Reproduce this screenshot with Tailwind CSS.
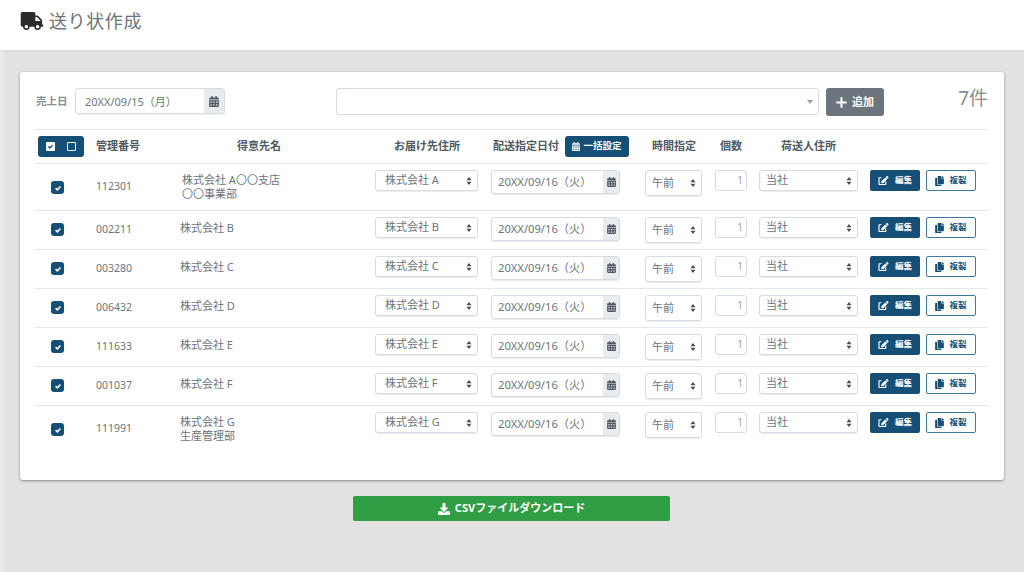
<!DOCTYPE html>
<html lang="ja">
<head>
  <meta charset="UTF-8" />
  <title>送り状作成</title>
  <script src="https://cdn.jsdelivr.net/npm/@tailwindcss/browser@4"></script>
</head>
<body class="relative h-[572px] w-[1024px] overflow-hidden bg-[#e2e2e2] font-['Noto_Sans','Noto_Sans_CJK_JP',sans-serif] text-[#6c757d]">
  <svg class="hidden">
    <symbol id="i-truck" viewBox="0 0 640 512"><path fill="currentColor" d="M624 352h-16V243.9c0-12.7-5.1-24.9-14.1-33.9L494 110.1c-9-9-21.2-14.1-33.9-14.1H416V48c0-26.5-21.5-48-48-48H48C21.5 0 0 21.5 0 48v320c0 26.5 21.5 48 48 48h16c0 53 43 96 96 96s96-43 96-96h128c0 53 43 96 96 96s96-43 96-96h48c8.8 0 16-7.2 16-16v-32c0-8.8-7.2-16-16-16zM160 464c-26.5 0-48-21.5-48-48s21.5-48 48-48 48 21.5 48 48-21.5 48-48 48zm320 0c-26.5 0-48-21.5-48-48s21.5-48 48-48 48 21.5 48 48-21.5 48-48 48zm80-208H416V144h44.1l99.9 99.9V256z"/></symbol>
    <symbol id="i-cal" viewBox="0 0 448 512"><path fill="currentColor" d="M0 464c0 26.5 21.5 48 48 48h352c26.5 0 48-21.5 48-48V192H0v272zm320-196c0-6.6 5.4-12 12-12h40c6.6 0 12 5.4 12 12v40c0 6.6-5.4 12-12 12h-40c-6.6 0-12-5.4-12-12v-40zm0 128c0-6.6 5.4-12 12-12h40c6.6 0 12 5.4 12 12v40c0 6.6-5.4 12-12 12h-40c-6.6 0-12-5.4-12-12v-40zM192 268c0-6.6 5.4-12 12-12h40c6.6 0 12 5.4 12 12v40c0 6.6-5.4 12-12 12h-40c-6.6 0-12-5.4-12-12v-40zm0 128c0-6.6 5.4-12 12-12h40c6.6 0 12 5.4 12 12v40c0 6.6-5.4 12-12 12h-40c-6.6 0-12-5.4-12-12v-40zM64 268c0-6.6 5.4-12 12-12h40c6.6 0 12 5.4 12 12v40c0 6.6-5.4 12-12 12H76c-6.6 0-12-5.4-12-12v-40zm0 128c0-6.6 5.4-12 12-12h40c6.6 0 12 5.4 12 12v40c0 6.6-5.4 12-12 12H76c-6.6 0-12-5.4-12-12v-40zM400 64h-48V16c0-8.8-7.2-16-16-16h-32c-8.8 0-16 7.2-16 16v48H160V16c0-8.8-7.2-16-16-16h-32c-8.8 0-16 7.2-16 16v48H48C21.5 64 0 85.5 0 112v48h448v-48c0-26.5-21.5-48-48-48z"/></symbol>
    <symbol id="i-edit" viewBox="0 0 576 512"><path fill="currentColor" d="M402.6 83.2l90.2 90.2c3.8 3.8 3.8 10 0 13.8L274.4 405.6l-92.8 10.3c-12.4 1.4-22.9-9.1-21.5-21.5l10.3-92.8L388.8 83.2c3.8-3.8 10-3.8 13.8 0zm162-22.9l-48.8-48.8c-15.2-15.2-39.9-15.2-55.2 0l-35.4 35.4c-3.8 3.8-3.8 10 0 13.8l90.2 90.2c3.8 3.8 10 3.8 13.8 0l35.4-35.4c15.2-15.3 15.2-40 0-55.2zM384 346.2V448H64V128h73.1c3.2 0 6.2-1.3 8.5-3.5l40-40c7.6-7.6 2.2-20.5-8.5-20.5H48C21.5 64 0 85.5 0 112v352c0 26.5 21.5 48 48 48h352c26.5 0 48-21.5 48-48V306.2c0-10.7-12.9-16-20.5-8.5l-40 40c-2.2 2.3-3.5 5.3-3.5 8.5z"/></symbol>
    <symbol id="i-copy" viewBox="0 0 448 512"><path fill="currentColor" d="M320 448v40c0 13.255-10.745 24-24 24H24c-13.255 0-24-10.745-24-24V120c0-13.255 10.745-24 24-24h72v296c0 30.879 25.121 56 56 56h168zm0-344V0H152c-13.255 0-24 10.745-24 24v368c0 13.255 10.745 24 24 24h272c13.255 0 24-10.745 24-24V128H344c-13.2 0-24-10.8-24-24zm120.971-31.029L375.029 7.029A24 24 0 0 0 358.059 0H352v96h96v-6.059a24 24 0 0 0-7.029-16.97z"/></symbol>
    <symbol id="i-dl" viewBox="0 0 512 512"><path fill="currentColor" d="M216 0h80c13.3 0 24 10.7 24 24v168h87.7c17.8 0 26.7 21.5 14.1 34.1L269.7 378.3c-7.5 7.5-19.8 7.5-27.3 0L90.1 226.1c-12.6-12.6-3.7-34.1 14.1-34.1H192V24c0-13.3 10.7-24 24-24zm296 376v112c0 13.3-10.7 24-24 24H24c-13.3 0-24-10.7-24-24V376c0-13.3 10.7-24 24-24h146.7l49 49c20.1 20.1 52.5 20.1 72.6 0l49-49H488c13.3 0 24 10.7 24 24zm-124 88c0-11-9-20-20-20s-20 9-20 20 9 20 20 20 20-9 20-20zm64 0c0-11-9-20-20-20s-20 9-20 20 9 20 20 20 20-9 20-20z"/></symbol>
    <symbol id="i-sort" viewBox="0 0 10 14"><path fill="currentColor" d="M5 0.5 9.2 5.6H0.8zM5 13.5 0.8 8.4H9.2z"/></symbol>
    <symbol id="i-plus" viewBox="0 0 12 12"><path fill="none" stroke="currentColor" stroke-width="2.2" stroke-linecap="round" d="M6 1.2v9.6M1.2 6h9.6"/></symbol>
  </svg>

  <!-- left edge shade -->
  <div class="absolute inset-y-0 left-0 z-10 w-[7px] bg-gradient-to-r from-white/40 to-white/0"></div>

  <header class="flex h-[50px] items-center bg-white pb-[8px] pl-[20px] shadow-[0_1px_2px_rgba(0,0,0,0.06)]">
    <svg class="h-[18px] w-[24px] text-[#2c2c2c]"><use href="#i-truck"/></svg>
    <h1 class="ml-[5px] text-[18px] leading-none tracking-[0.6px] text-[#6c757d]">送り状作成</h1>
  </header>

  <main class="mx-[20px] mt-[22px] h-[408px] rounded-[3px] bg-white pl-[15px] pr-[16px] shadow-[0_1px_3px_rgba(0,0,0,0.4)]">
    <!-- top toolbar -->
    <div class="flex h-[57px] items-start pt-[16px]">
      <span class="ml-[1px] mt-[6px] w-[39px] text-[10.5px] font-bold leading-[14px] text-[#868e96]">売上日</span>
      <div class="flex h-[26px] w-[150px] overflow-hidden rounded-[3px] border border-[#d5dce4] shadow-[0_1px_1px_rgba(0,0,0,0.06)]">
        <span class="flex-1 pl-[9px] text-[11px] leading-[25px] text-[#6c757d]">20XX/09/15（月）</span>
        <span class="flex w-[20px] items-center justify-center bg-[#e9ecef] text-[#4f5962]"><svg class="h-[11px] w-[10px]"><use href="#i-cal"/></svg></span>
      </div>
      <div class="relative ml-[111px] h-[27px] w-[483px] rounded-[3px] border border-[#d5dce4]">
        <span class="absolute right-[5px] top-[11px] h-0 w-0 border-x-[3px] border-t-[4px] border-x-transparent border-t-[#9aa1a8]"></span>
      </div>
      <button class="ml-[7px] flex h-[28px] w-[58px] items-center justify-center gap-[5px] rounded-[3px] bg-[#6c757d] text-[11px] font-bold text-white">
        <svg class="h-[11px] w-[11px]"><use href="#i-plus"/></svg>追加
      </button>
      <span class="ml-auto mt-[-3px] text-[19px] leading-[26px] text-[#868e96]">7件</span>
    </div>

    <!-- table head -->
    <div class="grid h-[35px] grid-cols-[61px_84px_195px_116px_154px_70px_44px_229px] items-center border-y border-[#e6e8ea] text-[11px] font-bold text-[#4f5962]">
      <div class="pl-[3px]">
        <div class="flex h-[21px] w-[46px] items-center justify-around rounded-[3px] bg-[#154f76] px-[2px] text-white">
          <span class="flex h-[9px] w-[9px] items-center justify-center rounded-[1px] bg-white"><svg class="h-[7px] w-[7px] text-[#154f76]" viewBox="0 0 10 10"><path fill="none" stroke="currentColor" stroke-width="2" d="M2 5l2.2 2.2L8 3"/></svg></span>
          <span class="h-[9px] w-[9px] rounded-[1px] border border-white"></span>
        </div>
      </div>
      <div>管理番号</div>
      <div class="pl-[57px]">得意先名</div>
      <div class="pl-[19px]">お届け先住所</div>
      <div class="flex items-center pl-[2px]">配送指定日付
        <span class="ml-[6px] flex h-[21px] w-[64px] items-center justify-center gap-[3px] rounded-[3px] bg-[#154f76] text-[9.5px] text-white"><svg class="h-[9px] w-[8px]"><use href="#i-cal"/></svg>一括設定</span>
      </div>
      <div class="pl-[7px]">時間指定</div>
      <div class="pl-[5px]">個数</div>
      <div class="pl-[22px]">荷送人住所</div>
    </div>

    <!-- table rows -->
    <div id="rows"></div>
  </main>

  <div class="mt-[16px] flex justify-center">
    <button class="ml-[-1px] flex h-[25px] w-[317px] items-center justify-center gap-[5px] rounded-[2px] bg-[#2f9e44] text-[11px] font-bold text-white">
      <svg class="h-[12px] w-[12px]"><use href="#i-dl"/></svg>CSVファイルダウンロード
    </button>
  </div>

  <script>
    const data = [
      ["112301", "株式会社 A〇〇支店<br>〇〇事業部", "A", "h-[47px]", "pl-[2px]"],
      ["002211", "株式会社 B", "B", "h-[39px]", ""],
      ["003280", "株式会社 C", "C", "h-[39px]", ""],
      ["006432", "株式会社 D", "D", "h-[39px]", ""],
      ["111633", "株式会社 E", "E", "h-[39px]", ""],
      ["001037", "株式会社 F", "F", "h-[39px]", ""],
      ["111991", "株式会社 G<br>生産管理部", "G", "h-[46px]", ""],
    ];

    const selectBox = (width, height, text, extra) => `
      <div class="flex ${width} ${height} items-center justify-between rounded-[3px] border border-[#d5dce4] pr-[5px] text-[11px] text-[#6c757d] shadow-[0_1px_1px_rgba(0,0,0,0.08)] ${extra}">
        <span>${text}</span><svg class="h-[10px] w-[6px] text-[#454d55]"><use href="#i-sort"/></svg>
      </div>`;

    document.getElementById("rows").innerHTML = data.map((r, i) => `
      <div class="grid ${r[3]} grid-cols-[61px_84px_195px_116px_154px_70px_44px_229px] items-start ${i < 6 ? "border-b border-[#e6e8ea]" : ""} pt-[6px]">
        <div class="pl-[16px] ${r[1].includes("br") ? "pt-[11px]" : "pt-[6px]"}">
          <span class="flex h-[13px] w-[13px] items-center justify-center rounded-[3px] bg-[#154f76] text-white"><svg class="h-[8px] w-[8px]" viewBox="0 0 10 10"><path fill="none" stroke="currentColor" stroke-width="2" d="M2 5.2l2.2 2.2L8 3"/></svg></span>
        </div>
        <div class="text-[10.5px] leading-[16px] ${r[1].includes("br") ? "pt-[8px]" : "pt-[4px]"}">${r[0]}</div>
        <div class="text-[11px] leading-[14px] ${r[4]} ${r[1].includes("br") ? "pt-[3px]" : "pt-[4px]"}">${r[1]}</div>
        ${selectBox("w-[103px]", "h-[21px]", "株式会社 " + r[2], "pl-[9px]")}
        <div class="flex h-[24px] w-[129px] overflow-hidden rounded-[3px] border border-[#d5dce4] shadow-[0_1px_1px_rgba(0,0,0,0.08)]">
          <span class="flex-1 pl-[6px] text-[11.2px] leading-[22px]">20XX/09/16（火）</span>
          <span class="flex w-[16px] items-center justify-center bg-[#e9ecef] text-[#4f5962]"><svg class="h-[10px] w-[9px]"><use href="#i-cal"/></svg></span>
        </div>
        ${selectBox("w-[57px]", "h-[26px]", "午前", "pl-[6px]")}
        <div class="h-[21px] w-[32px] rounded-[3px] border border-[#d5dce4] pr-[3px] text-right text-[10px] leading-[18px] text-[#9aa1a8]">1</div>
        <div class="flex items-start">
          ${selectBox("w-[99px]", "h-[21px]", "当社", "pl-[6px]")}
          <button class="ml-[12px] flex h-[21px] w-[50px] items-center justify-center gap-[6px] rounded-[2px] bg-[#154f76] text-[8.5px] font-bold text-white"><svg class="h-[9px] w-[11px]"><use href="#i-edit"/></svg>編集</button>
          <button class="ml-[6px] flex h-[21px] w-[50px] items-center justify-center gap-[5px] rounded-[2px] border-[1.5px] border-[#3f7a9e] bg-white text-[8.5px] font-bold text-[#154f76]"><svg class="h-[10px] w-[9px]"><use href="#i-copy"/></svg>複製</button>
        </div>
      </div>`).join("");
  </script>
</body>
</html>
